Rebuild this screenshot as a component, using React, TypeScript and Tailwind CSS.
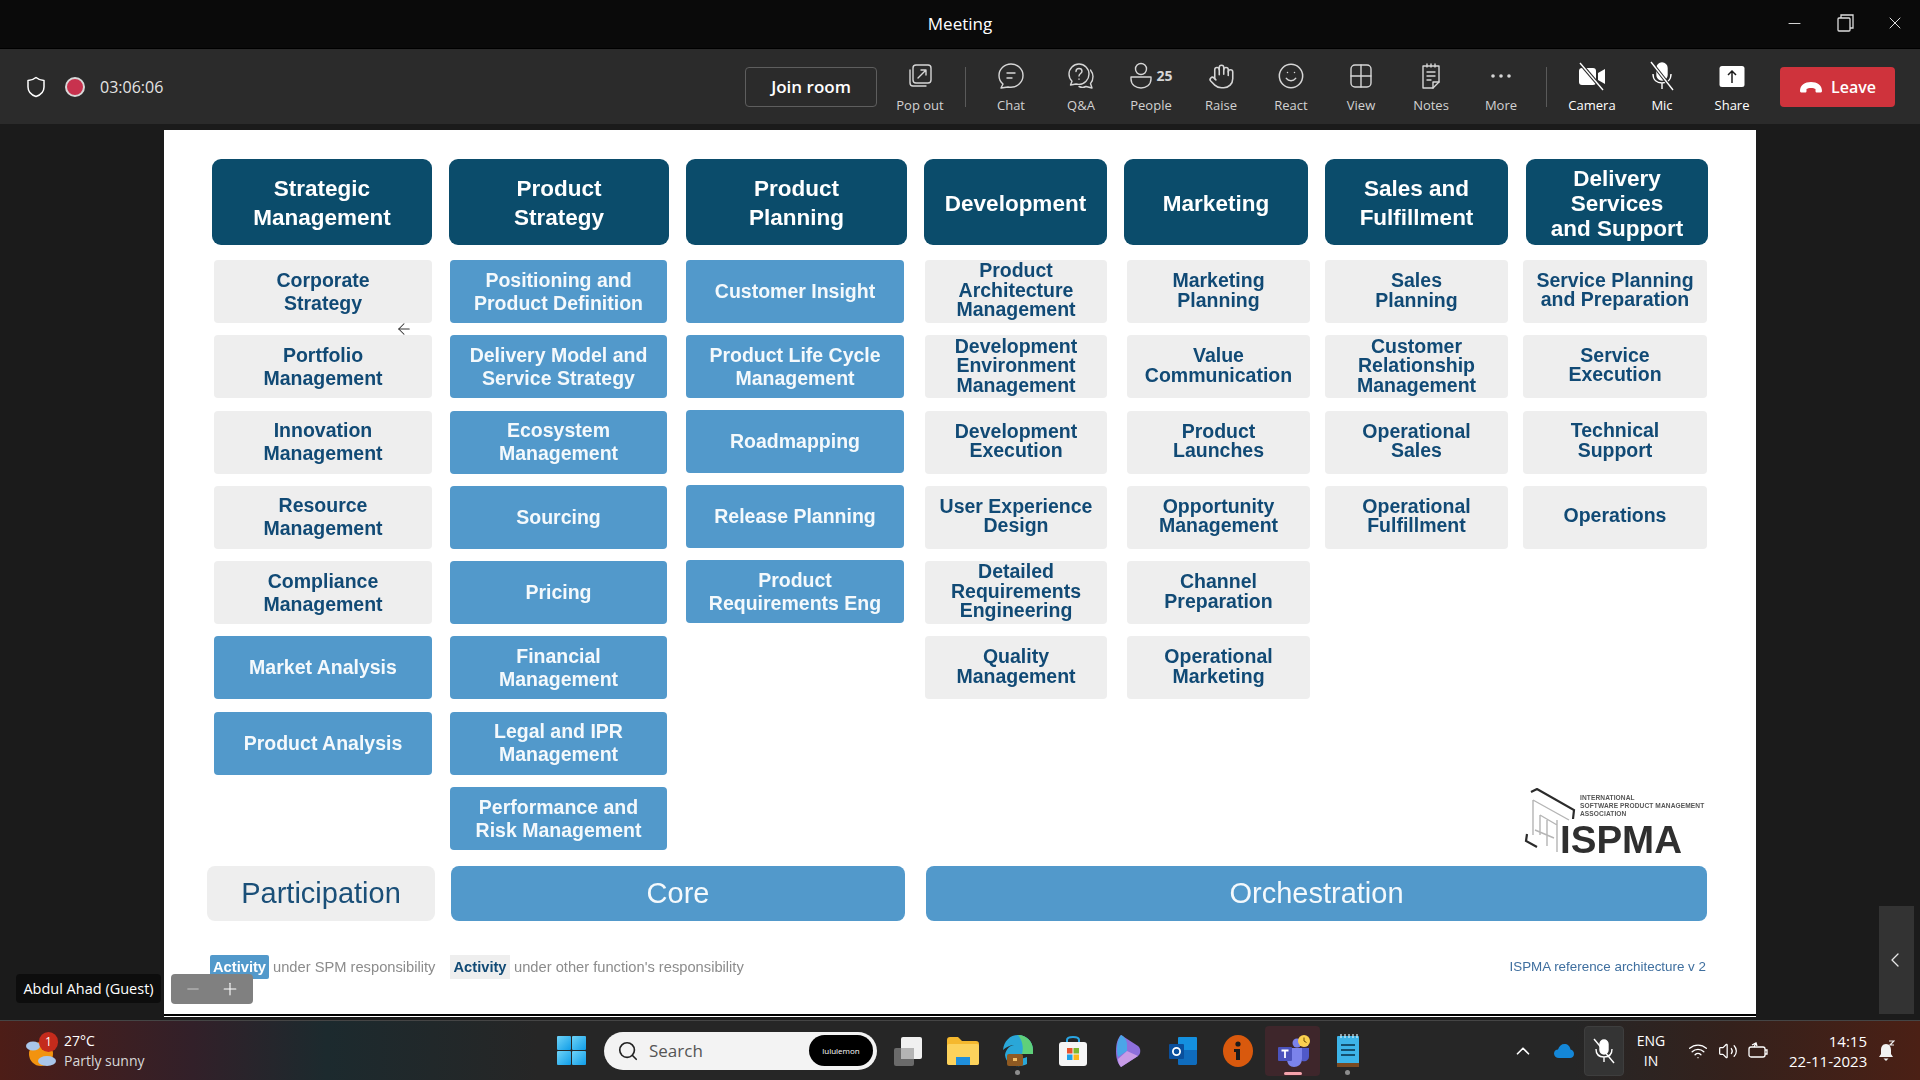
import React, { FC, ReactNode } from 'react'
import { ArrowLeft, ChevronLeft, ChevronUp, Hand, Minus, Plus, Search, Smile, Volume2, Wifi, X } from 'lucide-react'

type Tone = 'gray' | 'blue'

interface Column {
  title: string
  width: string
  cell: string
  leading: string
  gap: string
  items: { text: string; tone: Tone }[]
}

const gray = (text: string) => ({ text, tone: 'gray' as Tone })
const blue = (text: string) => ({ text, tone: 'blue' as Tone })

const leftColumns: Column[] = [
  {
    title: 'Strategic\nManagement',
    width: 'w-[220px]',
    cell: 'ml-[2px]',
    leading: 'leading-[23px]',
    gap: 'gap-[12.3px]',
    items: [
      gray('Corporate\nStrategy'),
      gray('Portfolio\nManagement'),
      gray('Innovation\nManagement'),
      gray('Resource\nManagement'),
      gray('Compliance\nManagement'),
      blue('Market Analysis'),
      blue('Product Analysis'),
    ],
  },
  {
    title: 'Product\nStrategy',
    width: 'w-[220px]',
    cell: 'ml-[1px] mr-[2px]',
    leading: 'leading-[23px]',
    gap: 'gap-[12.3px]',
    items: [
      blue('Positioning and\nProduct Definition'),
      blue('Delivery Model and\nService Strategy'),
      blue('Ecosystem\nManagement'),
      blue('Sourcing'),
      blue('Pricing'),
      blue('Financial\nManagement'),
      blue('Legal and IPR\nManagement'),
      blue('Performance and\nRisk Management'),
    ],
  },
  {
    title: 'Product\nPlanning',
    width: 'w-[221px]',
    cell: 'mr-[3px]',
    leading: 'leading-[23px]',
    gap: 'gap-[12px]',
    items: [
      blue('Customer Insight'),
      blue('Product Life Cycle\nManagement'),
      blue('Roadmapping'),
      blue('Release Planning'),
      blue('Product\nRequirements Eng'),
    ],
  },
  {
    title: 'Development',
    width: 'w-[183px]',
    cell: 'ml-[1px] pb-[2px]',
    leading: 'leading-[19.5px]',
    gap: 'gap-[12.3px]',
    items: [
      gray('Product\nArchitecture\nManagement'),
      gray('Development\nEnvironment\nManagement'),
      gray('Development\nExecution'),
      gray('User Experience\nDesign'),
      gray('Detailed\nRequirements\nEngineering'),
      gray('Quality\nManagement'),
    ],
  },
  {
    title: 'Marketing',
    width: 'w-[184px]',
    cell: 'ml-[3px] -mr-[2px] pb-[2px]',
    leading: 'leading-[19.5px]',
    gap: 'gap-[12.3px]',
    items: [
      gray('Marketing\nPlanning'),
      gray('Value\nCommunication'),
      gray('Product\nLaunches'),
      gray('Opportunity\nManagement'),
      gray('Channel\nPreparation'),
      gray('Operational\nMarketing'),
    ],
  },
]

const rightColumns: Column[] = [
  {
    title: 'Sales and\nFulfillment',
    width: 'w-[183px]',
    cell: 'pb-[2px]',
    leading: 'leading-[19.5px]',
    gap: 'gap-[12.3px]',
    items: [
      gray('Sales\nPlanning'),
      gray('Customer\nRelationship\nManagement'),
      gray('Operational\nSales'),
      gray('Operational\nFulfillment'),
    ],
  },
  {
    title: 'Delivery\nServices\nand Support',
    width: 'w-[182px]',
    cell: '-ml-[3px] mr-[1px] pb-[3px]',
    leading: 'leading-[19.5px]',
    gap: 'gap-[12.3px]',
    items: [
      gray('Service Planning\nand Preparation'),
      gray('Service\nExecution'),
      gray('Technical\nSupport'),
      gray('Operations'),
    ],
  },
]

const DiagramColumn: FC<{ col: Column }> = ({ col }) => (
  <div className={`${col.width} shrink-0 flex flex-col`}>
    <div className="h-[86px] mb-[15px] pt-[2px] rounded-[9px] bg-[#0b4c6b] flex items-center justify-center text-center text-white font-bold text-[22.5px] leading-[29px] whitespace-pre-line">
      {col.title.split('\n').length > 2 ? <span className="leading-[25px]">{col.title}</span> : col.title}
    </div>
    <div className={`flex flex-col ${col.gap}`}>
      {col.items.map((item) => (
        <div
          key={item.text}
          className={`h-[63px] rounded-[4px] flex items-center justify-center text-center font-bold text-[19.5px] whitespace-pre-line ${col.leading} ${col.cell} ${
            item.tone === 'blue' ? 'bg-[#5299cb] text-[#f4f9fc]' : 'bg-[#eeeeee] text-[#114a75]'
          }`}
        >
          {item.text}
        </div>
      ))}
    </div>
  </div>
)

const IspmaLogo = () => (
  <div className="relative ml-[199px] -mb-[3px] mt-auto h-[66px] w-[182px]">
    <svg className="absolute left-0 top-0" width="58" height="66" viewBox="0 0 58 66" fill="none">
      <path d="M7 4 L13 1 L50 22 L49 31" stroke="#2b2b2b" strokeWidth="2.2" />
      <path d="M3 46 L2 53 L13 59" stroke="#2b2b2b" strokeWidth="2.2" />
      <path d="M9 12 L45 32 M9 12 L9 47 M16 27 L16 47 M33 32 L33 64 M16 27 L33 37 M11 42 L30 50 M23 32 L23 58" stroke="#b5b5b5" strokeWidth="1.4" />
    </svg>
    <div className="absolute left-[56px] top-[6px] text-[6.6px] leading-[8px] font-bold text-[#555555] whitespace-pre tracking-[0.1px]">
      {'INTERNATIONAL\nSOFTWARE PRODUCT MANAGEMENT\nASSOCIATION'}
    </div>
    <div className="absolute left-[36px] top-[33px] text-[38.5px] leading-[38px] font-bold text-[#2f2f2f]">ISPMA</div>
  </div>
)

const Slide = () => (
  <div className="relative w-[1592px] h-[884px] bg-white pt-[29px] blur-[0.4px] font-['Liberation_Sans',Arial,sans-serif]">
    <div className="flex h-[692px] pl-[48px] gap-[17px]">
      {leftColumns.map((col) => (
        <DiagramColumn key={col.title} col={col} />
      ))}
      <div className="flex flex-col">
        <div className="flex gap-[18px]">
          {rightColumns.map((col) => (
            <DiagramColumn key={col.title} col={col} />
          ))}
        </div>
        <IspmaLogo />
      </div>
    </div>
    <div className="flex h-[55px] mt-[15px] ml-[43px] text-[29px]">
      <div className="w-[228px] rounded-[8px] bg-[#eeeeee] text-[#1a4f78] flex items-center justify-center">Participation</div>
      <div className="w-[454px] ml-[16px] rounded-[8px] bg-[#5299cb] text-[#f4f9fc] flex items-center justify-center">Core</div>
      <div className="w-[781px] ml-[21px] rounded-[8px] bg-[#5299cb] text-[#f4f9fc] flex items-center justify-center">Orchestration</div>
    </div>
    <div className="flex items-center h-[24px] mt-[34px] ml-[46px] mr-[50px] text-[14.7px] text-[#8c8c8c]">
      <span className="w-[59px] h-[24px] bg-[#5299cb] text-white font-bold flex items-center justify-center rounded-[2px]">Activity</span>
      <span className="ml-[4px] w-[177px]">under SPM responsibility</span>
      <span className="w-[60px] h-[24px] bg-[#eeeeee] text-[#114a75] font-bold flex items-center justify-center">Activity</span>
      <span className="ml-[4px]">under other function's responsibility</span>
      <span className="ml-auto text-[13.4px] text-[#3f6f9f]">ISPMA reference architecture v 2</span>
    </div>
    <ArrowLeft className="absolute left-[231px] top-[190px] text-[#333333]" size={18} strokeWidth={1.4} />
  </div>
)

const ToolButton: FC<{ label: string; children: ReactNode; bright?: boolean }> = ({ label, children, bright }) => (
  <div className="w-[70px] h-[60px] mt-[9px] flex flex-col items-center shrink-0">
    <div className="h-[30px] flex items-center justify-center text-[#d6d6d6]">{children}</div>
    <span className={`mt-[5px] text-[13px] leading-[18px] ${bright ? 'text-white' : 'text-[#d2d2d2]'}`}>{label}</span>
  </div>
)

const stroke = { fill: 'none', stroke: 'currentColor', strokeWidth: 1.4, strokeLinecap: 'round' as const, strokeLinejoin: 'round' as const }

const Toolbar = () => (
  <div className="h-[75px] bg-[#2b2b2b] flex items-center pl-[26px] pr-[25px] text-white">
    <svg width="20" height="22" viewBox="0 0 20 22" {...stroke} strokeWidth={1.5}>
      <path d="M10 1.5 C7 4 4.5 4.5 2 4.5 V11 C2 15.5 5.5 19 10 20.5 C14.5 19 18 15.5 18 11 V4.5 C15.5 4.5 13 4 10 1.5Z" />
    </svg>
    <div className="ml-[19px] w-[20px] h-[20px] rounded-full border-[2.5px] border-[#d8d8d8] bg-[#c8324e]" />
    <span className="ml-[15px] text-[16px] text-[#e4e4e4]">03:06:06</span>
    <div className="ml-auto w-[132px] h-[40px] rounded-[4px] border border-[#5e5e5e] flex items-center justify-center font-semibold text-[17px]">Join room</div>
    <div className="ml-[8px]">
      <ToolButton label="Pop out">
        <svg width="26" height="26" viewBox="0 0 26 26" {...stroke}>
          <rect x="6" y="2" width="18" height="18" rx="3" />
          <path d="M3 7 V20 C3 22 4 23 6 23 H19" />
          <path d="M11 15 L19 7 M14 7 H19 V12" />
        </svg>
      </ToolButton>
    </div>
    <div className="mx-[10px] w-px h-[40px] bg-[#5a5a5a]" />
    <ToolButton label="Chat">
      <svg width="28" height="28" viewBox="0 0 28 28" {...stroke}>
        <path d="M14 2 C7.5 2 2 7 2 13.5 C2 17 3.5 20 6 22 L4 26 L11 25 C12 25.2 13 25.3 14 25.3 C20.5 25.3 26 20 26 13.5 C26 7 20.5 2 14 2Z" />
        <path d="M10 11 H18 M10 16 H15" />
      </svg>
    </ToolButton>
    <ToolButton label="Q&A">
      <svg width="28" height="28" viewBox="0 0 28 28" {...stroke}>
        <path d="M12 2 C6.5 2 2 6.5 2 12 C2 15 3.2 17.5 5 19.2 L3.5 23 L9 22 C10 22.2 11 22.4 12 22.4 C17.5 22.4 22 17.5 22 12 C22 6.5 17.5 2 12 2Z" />
        <path d="M9 9.5 C9 7.5 10.5 6.5 12 6.5 C13.7 6.5 15 7.6 15 9.2 C15 11.5 12 11.5 12 14" />
        <path d="M12 17 V17.2" />
        <path d="M23.5 8 C25 10 26 12 26 14.5 C26 17.5 25 20 23.5 21.5 L25 26 L19 24.5 C17 25.5 14 25.5 12 24.5" />
      </svg>
    </ToolButton>
    <ToolButton label="People">
      <div className="flex items-center">
        <svg width="24" height="28" viewBox="0 0 24 28" {...stroke}>
          <circle cx="12" cy="7" r="5.5" />
          <path d="M2 15 H22 V17 C22 23 17 26 12 26 C7 26 2 23 2 17Z" />
        </svg>
        <span className="ml-[3px] text-[14px] font-bold leading-none text-[#d6d6d6]">25</span>
      </div>
    </ToolButton>
    <ToolButton label="Raise">
      <Hand size={27} strokeWidth={1.4} />
    </ToolButton>
    <ToolButton label="React">
      <Smile size={28} strokeWidth={1.3} />
    </ToolButton>
    <ToolButton label="View">
      <svg width="24" height="26" viewBox="0 0 24 26" {...stroke}>
        <rect x="2" y="2" width="20" height="22" rx="4" />
        <path d="M2 13 H22 M12 2 V13 M12 13 V24" />
      </svg>
    </ToolButton>
    <ToolButton label="Notes">
      <svg width="24" height="28" viewBox="0 0 24 28" {...stroke}>
        <path d="M4 4 H20 V20 L14 26 H4Z" />
        <path d="M14 26 V20 H20 M8 2 V5 M12 2 V5 M16 2 V5 M8 10 H16 M8 14 H16 M8 18 H12" />
      </svg>
    </ToolButton>
    <ToolButton label="More">
      <svg width="22" height="6" viewBox="0 0 22 6" fill="currentColor">
        <circle cx="3" cy="3" r="1.8" />
        <circle cx="11" cy="3" r="1.8" />
        <circle cx="19" cy="3" r="1.8" />
      </svg>
    </ToolButton>
    <div className="mx-[10px] w-px h-[40px] bg-[#5a5a5a]" />
    <ToolButton label="Camera" bright>
      <svg className="text-white" width="30" height="30" viewBox="0 0 30 30" fill="currentColor">
        <rect x="2" y="7" width="17" height="17" rx="3" />
        <path d="M21 12 L28 8 V23 L21 19Z" />
        <path d="M3 2 L26 29" stroke="#2b2b2b" strokeWidth="3.5" />
        <path d="M3 2 L26 29" stroke="currentColor" strokeWidth="1.4" />
      </svg>
    </ToolButton>
    <ToolButton label="Mic" bright>
      <svg className="text-white" width="28" height="30" viewBox="0 0 28 30" fill="none" stroke="currentColor" strokeWidth="1.4">
        <rect x="9" y="2" width="10" height="17" rx="5" fill="currentColor" />
        <path d="M5 13 C5 19 9 22 14 22 C19 22 23 19 23 13 M14 22 V28" />
        <path d="M3 1 L25 29" stroke="#2b2b2b" strokeWidth="3.5" />
        <path d="M3 1 L25 29" />
      </svg>
    </ToolButton>
    <ToolButton label="Share" bright>
      <svg width="26" height="26" viewBox="0 0 26 26">
        <rect x="0.5" y="3" width="25" height="21" rx="2.5" fill="#ffffff" />
        <path d="M13 20 V8 M9 12 L13 8 L17 12" fill="none" stroke="#1b1b1b" strokeWidth="1.5" />
      </svg>
    </ToolButton>
    <div className="ml-[13px] w-[115px] h-[40px] rounded-[4px] bg-[#cf333c] flex items-center justify-center font-semibold text-[16px] gap-[8px]">
      <svg width="24" height="12" viewBox="0 0 24 12" fill="#ffffff">
        <path d="M1 10 C1 4 6 1 12 1 C18 1 23 4 23 10 C23 11 22 11.5 21 11.5 H18 C17 11.5 16.5 11 16.5 10 V8 C15 6.5 9 6.5 7.5 8 V10 C7.5 11 7 11.5 6 11.5 H3 C2 11.5 1 11 1 10Z" />
      </svg>
      Leave
    </div>
  </div>
)

const TaskIcon: FC<{ children: ReactNode; dot?: boolean; active?: boolean }> = ({ children, dot, active }) => (
  <div className={`relative w-[55px] h-[50px] shrink-0 flex items-center justify-center rounded-[4px] ${active ? 'bg-[#3e262b]' : ''}`}>
    {children}
    {dot && <span className="absolute bottom-[1px] w-[5px] h-[5px] rounded-full bg-[#8d8d8d]" />}
    {active && <span className="absolute bottom-[1px] w-[18px] h-[3px] rounded-full bg-[#f5a3ac]" />}
  </div>
)

const Taskbar = () => (
  <div className="h-[60px] border-t border-[#454545] flex items-center text-white bg-[linear-gradient(90deg,#4d1d17_0%,#322029_10%,#1c2a2e_17%,#262626_28%,#262626_82%,#34211c_90%,#4b2015_100%)]">
    <div className="w-[557px] shrink-0 flex items-center pl-[26px]">
      <div className="relative w-[32px] h-[36px]">
        <svg width="32" height="36" viewBox="0 0 32 36">
          <circle cx="15" cy="21" r="12" fill="#f2930f" />
          <ellipse cx="7" cy="13" rx="7" ry="4.5" fill="#a9c6ea" />
          <ellipse cx="21" cy="28" rx="9" ry="5" fill="#a9c6ea" />
        </svg>
        <span className="absolute left-[13px] top-[-1px] w-[19px] h-[20px] rounded-full bg-[#c42b1c] flex items-center justify-center text-[12px] leading-none">1</span>
      </div>
      <div className="ml-[6px] text-[14px] leading-[20px]">
        <div>27°C</div>
        <div className="text-[#d8d8d8]">Partly sunny</div>
      </div>
    </div>
    <svg className="shrink-0" width="29" height="29" viewBox="0 0 29 29">
      <defs>
        <linearGradient id="win" x1="0" y1="0" x2="1" y2="1">
          <stop offset="0" stopColor="#6fd3f7" />
          <stop offset="1" stopColor="#0f9de8" />
        </linearGradient>
      </defs>
      <rect width="14" height="14" rx="1" fill="url(#win)" />
      <rect x="15" width="14" height="14" rx="1" fill="url(#win)" />
      <rect y="15" width="14" height="14" rx="1" fill="url(#win)" />
      <rect x="15" y="15" width="14" height="14" rx="1" fill="url(#win)" />
    </svg>
    <div className="ml-[18px] w-[273px] h-[38px] shrink-0 rounded-full bg-[#f3f3f3] flex items-center pl-[13px] pr-[4px] text-[#555555]">
      <Search className="text-[#222222]" size={22} strokeWidth={1.8} />
      <span className="ml-[10px] text-[17px]">Search</span>
      <span className="ml-auto w-[64px] h-[31px] rounded-full bg-black text-white text-[8px] flex items-center justify-center">lululemon</span>
    </div>
    <div className="ml-[3px] flex items-center">
      <TaskIcon>
        <svg width="30" height="30" viewBox="0 0 30 30">
          <rect x="1" y="12" width="20" height="18" rx="2" fill="#6a6a6a" />
          <rect x="8" y="1" width="21" height="22" rx="2" fill="#f0f0f0" />
          <rect x="8" y="12" width="13" height="11" fill="#b4b4b4" />
        </svg>
      </TaskIcon>
      <TaskIcon>
        <svg width="32" height="28" viewBox="0 0 32 28">
          <path d="M0 3 C0 1 1 0 3 0 H11 L15 4 H29 C31 4 32 5 32 7 V25 C32 27 31 28 29 28 H3 C1 28 0 27 0 25Z" fill="#f5b82e" />
          <rect y="7" width="32" height="21" rx="2" fill="#fcd25c" />
          <rect x="9" y="20" width="14" height="8" fill="#1f8fdc" />
        </svg>
      </TaskIcon>
      <TaskIcon dot>
        <svg width="32" height="32" viewBox="0 0 32 32">
          <path d="M1 15 C2 6 8 0 16 0 C25 0 31 7 31 15 L31 19 H11 C12 24 18 25 25 22 V29 C15 34 4 30 3 20 C4 14 8 10 13 10 C8 10 4 12 1 15Z" fill="#2aa7d8" />
          <path d="M16 0 C25 0 31 7 31 15 L31 19 H20 C22 12 20 5 16 0Z" fill="#5fd07a" />
          <rect x="5" y="19" width="16" height="12" rx="2" fill="#8f5a22" />
          <rect x="11" y="23" width="4" height="3" fill="#f3c06a" />
        </svg>
      </TaskIcon>
      <TaskIcon>
        <svg width="30" height="30" viewBox="0 0 30 30">
          <path d="M9 7 V4 C9 2 11 1 15 1 C19 1 21 2 21 4 V7" fill="none" stroke="#29a5e3" strokeWidth="2" />
          <rect x="1" y="6" width="28" height="24" rx="3" fill="#f5f5f5" />
          <rect x="9" y="12" width="5.5" height="5.5" fill="#e8532e" />
          <rect x="15.5" y="12" width="5.5" height="5.5" fill="#7cb82f" />
          <rect x="9" y="18.5" width="5.5" height="5.5" fill="#1da1e8" />
          <rect x="15.5" y="18.5" width="5.5" height="5.5" fill="#fbb81a" />
        </svg>
      </TaskIcon>
      <TaskIcon>
        <svg width="28" height="32" viewBox="0 0 28 32">
          <path d="M7 0 L24 11 C27 13 27 19 24 21 L7 32 C4 29 2 24 2 16 C2 8 4 3 7 0Z" fill="#8d6fdc" />
          <path d="M7 0 C11 2 13 6 13 10 V16 L4 22 C2 14 3 5 7 0Z" fill="#4aa5e8" />
          <path d="M13 16 L24 21 L7 32 C5 30 4 27 4 24Z" fill="#c79be6" />
        </svg>
      </TaskIcon>
      <TaskIcon>
        <svg width="30" height="30" viewBox="0 0 30 30">
          <rect x="10" y="1" width="19" height="24" rx="1" fill="#1490df" />
          <path d="M10 14 H29 V27 C29 28.5 28 29 27 29 H11 C10 29 10 28 10 27Z" fill="#0f6cbd" />
          <rect x="1" y="8" width="15" height="15" rx="1" fill="#0a4f9c" />
          <circle cx="8.5" cy="15.5" r="3.6" fill="none" stroke="#ffffff" strokeWidth="1.8" />
        </svg>
      </TaskIcon>
      <TaskIcon>
        <svg width="30" height="32" viewBox="0 0 30 32">
          <ellipse cx="15" cy="16" rx="15" ry="16" fill="#d9590d" />
          <circle cx="15" cy="9" r="2.6" fill="#1b1b1b" />
          <path d="M11 14 H17 V25 H13 V17 H11Z" fill="#1b1b1b" />
        </svg>
      </TaskIcon>
      <TaskIcon active>
        <svg width="34" height="34" viewBox="0 0 34 34">
          <circle cx="21" cy="9" r="4.5" fill="#7b83eb" />
          <circle cx="29" cy="10" r="3" fill="#5059c9" />
          <path d="M11 14 H26 V25 C26 30 22 33 18 33 C14 33 11 30 11 25Z" fill="#7b83eb" />
          <path d="M26 14 H33 V22 C33 26 30 28 26 27Z" fill="#5059c9" />
          <rect x="2" y="13" width="14" height="14" rx="1" fill="#4b53bc" />
          <path d="M5.5 16.5 H12.5 M9 16.5 V24" stroke="#ffffff" strokeWidth="1.8" />
          <circle cx="28" cy="7" r="6" fill="#fbd04f" />
          <path d="M28 3.5 V7 L30.5 8.5" fill="none" stroke="#6b4e00" strokeWidth="1" />
        </svg>
      </TaskIcon>
      <TaskIcon dot>
        <svg width="24" height="34" viewBox="0 0 24 34">
          <rect x="1" y="2" width="22" height="30" rx="1" fill="#3db4e8" />
          <rect x="1" y="29" width="22" height="4" fill="#7a4a22" />
          <path d="M5 0 V4 M9 0 V4 M13 0 V4 M17 0 V4 M21 0 V4" stroke="#d4f0fb" strokeWidth="1.2" />
          <path d="M5 11 H19 M5 16 H19 M5 21 H19" stroke="#14506f" strokeWidth="2" />
        </svg>
      </TaskIcon>
    </div>
    <div className="ml-auto flex items-center pr-[25px]">
      <ChevronUp size={22} strokeWidth={1.8} />
      <svg className="ml-[20px]" width="20" height="16" viewBox="0 0 20 16" fill="#1487d8">
        <path d="M5 15 C2 15 0 13 0 10.5 C0 8 2 6.5 4 6.5 C5 3 7.5 1 10.5 1 C13.5 1 16 3 16.5 6.5 C18.5 7 20 8.5 20 11 C20 13.5 18 15 16 15Z" />
      </svg>
      <div className="ml-[10px] w-[40px] h-[50px] rounded-[4px] bg-[#343434] border border-[#3e3e3e] flex items-center justify-center">
        <svg width="24" height="26" viewBox="0 0 24 26" fill="none" stroke="#ffffff" strokeWidth="1.4">
          <rect x="8" y="2" width="8" height="14" rx="4" fill="#ffffff" />
          <path d="M4 11 C4 16 7 19 12 19 C17 19 20 16 20 11 M12 19 V24" />
          <path d="M2 1 L22 25" />
        </svg>
      </div>
      <div className="ml-[8px] w-[38px] text-center text-[14px] leading-[20px]">
        ENG
        <br />
        IN
      </div>
      <Wifi className="ml-[18px]" size={20} strokeWidth={1.6} />
      <Volume2 className="ml-[10px]" size={20} strokeWidth={1.5} />
      <svg className="ml-[10px]" width="20" height="18" viewBox="0 0 20 18" fill="none" stroke="#ffffff" strokeWidth="1.3">
        <rect x="1" y="5" width="16" height="10" rx="2" />
        <path d="M17 8 H19 V12 H17 M8 1 L6 5 M4 3 L8 1 L9 4" />
      </svg>
      <div className="ml-[21px] w-[78px] text-right text-[15px] leading-[20px] whitespace-nowrap">
        14:15
        <br />
        22-11-2023
      </div>
      <svg className="ml-[10px]" width="18" height="22" viewBox="0 0 18 22" fill="#f2f2f2">
        <path d="M9 4 C5.5 4 4 7 4 10 V14 L2 17 H16 L14 14 V10 C14 7 12.5 4 9 4Z" />
        <path d="M6.5 18.5 H11.5 L9 21Z" />
        <path d="M12 1 H17 L13 5 H17" fill="none" stroke="#f2f2f2" strokeWidth="1.2" />
      </svg>
    </div>
  </div>
)

export default function App() {
  return (
    <div className="w-[1920px] h-[1080px] overflow-hidden flex flex-col font-['Open_Sans','Noto_Sans',sans-serif] bg-[#1b1b1b]">
      <div className="relative h-[49px] bg-[#0a0a0a] border-b border-[#000000] flex items-center justify-center text-white">
        <span className="text-[17px]">Meeting</span>
        <div className="absolute right-0 top-0 h-[46px] flex items-center text-[#dddddd]">
          <Minus className="mr-[33px]" size={19} strokeWidth={1.2} />
          <svg className="mr-[31px]" width="17" height="18" viewBox="0 0 17 18" fill="none" stroke="currentColor" strokeWidth="1.3">
            <rect x="1" y="4" width="12" height="13" rx="1" />
            <path d="M4 4 V1 H16 V14 H13" />
          </svg>
          <X className="mr-[15px]" size={20} strokeWidth={1.2} />
        </div>
      </div>
      <Toolbar />
      <div className="relative h-[896px] flex pl-[164px]">
        <div className="flex flex-col pt-[6px]">
          <Slide />
          <div className="h-[2px] bg-black" />
          <div className="h-[1px] bg-white" />
        </div>
        <div className="ml-[123px] mt-[782px] w-[35px] h-[108px] bg-[#333333] pr-[4px] flex items-center justify-center text-[#e8e8e8]">
          <ChevronLeft size={24} strokeWidth={1.3} />
        </div>
        <div className="absolute left-[16px] top-[850px] h-[29px] w-[145px] rounded-[4px] bg-[#0d0d0d] text-white text-[14.5px] flex items-center justify-center whitespace-nowrap">
          Abdul Ahad (Guest)
        </div>
        <div className="absolute left-[171px] top-[850px] h-[30px] w-[82px] rounded-[4px] bg-[#808080] text-white flex items-center justify-around px-[4px]">
          <Minus size={18} strokeWidth={1.3} className="text-[#c8c8c8]" />
          <Plus size={20} strokeWidth={1.3} />
        </div>
      </div>
      <Taskbar />
    </div>
  )
}
